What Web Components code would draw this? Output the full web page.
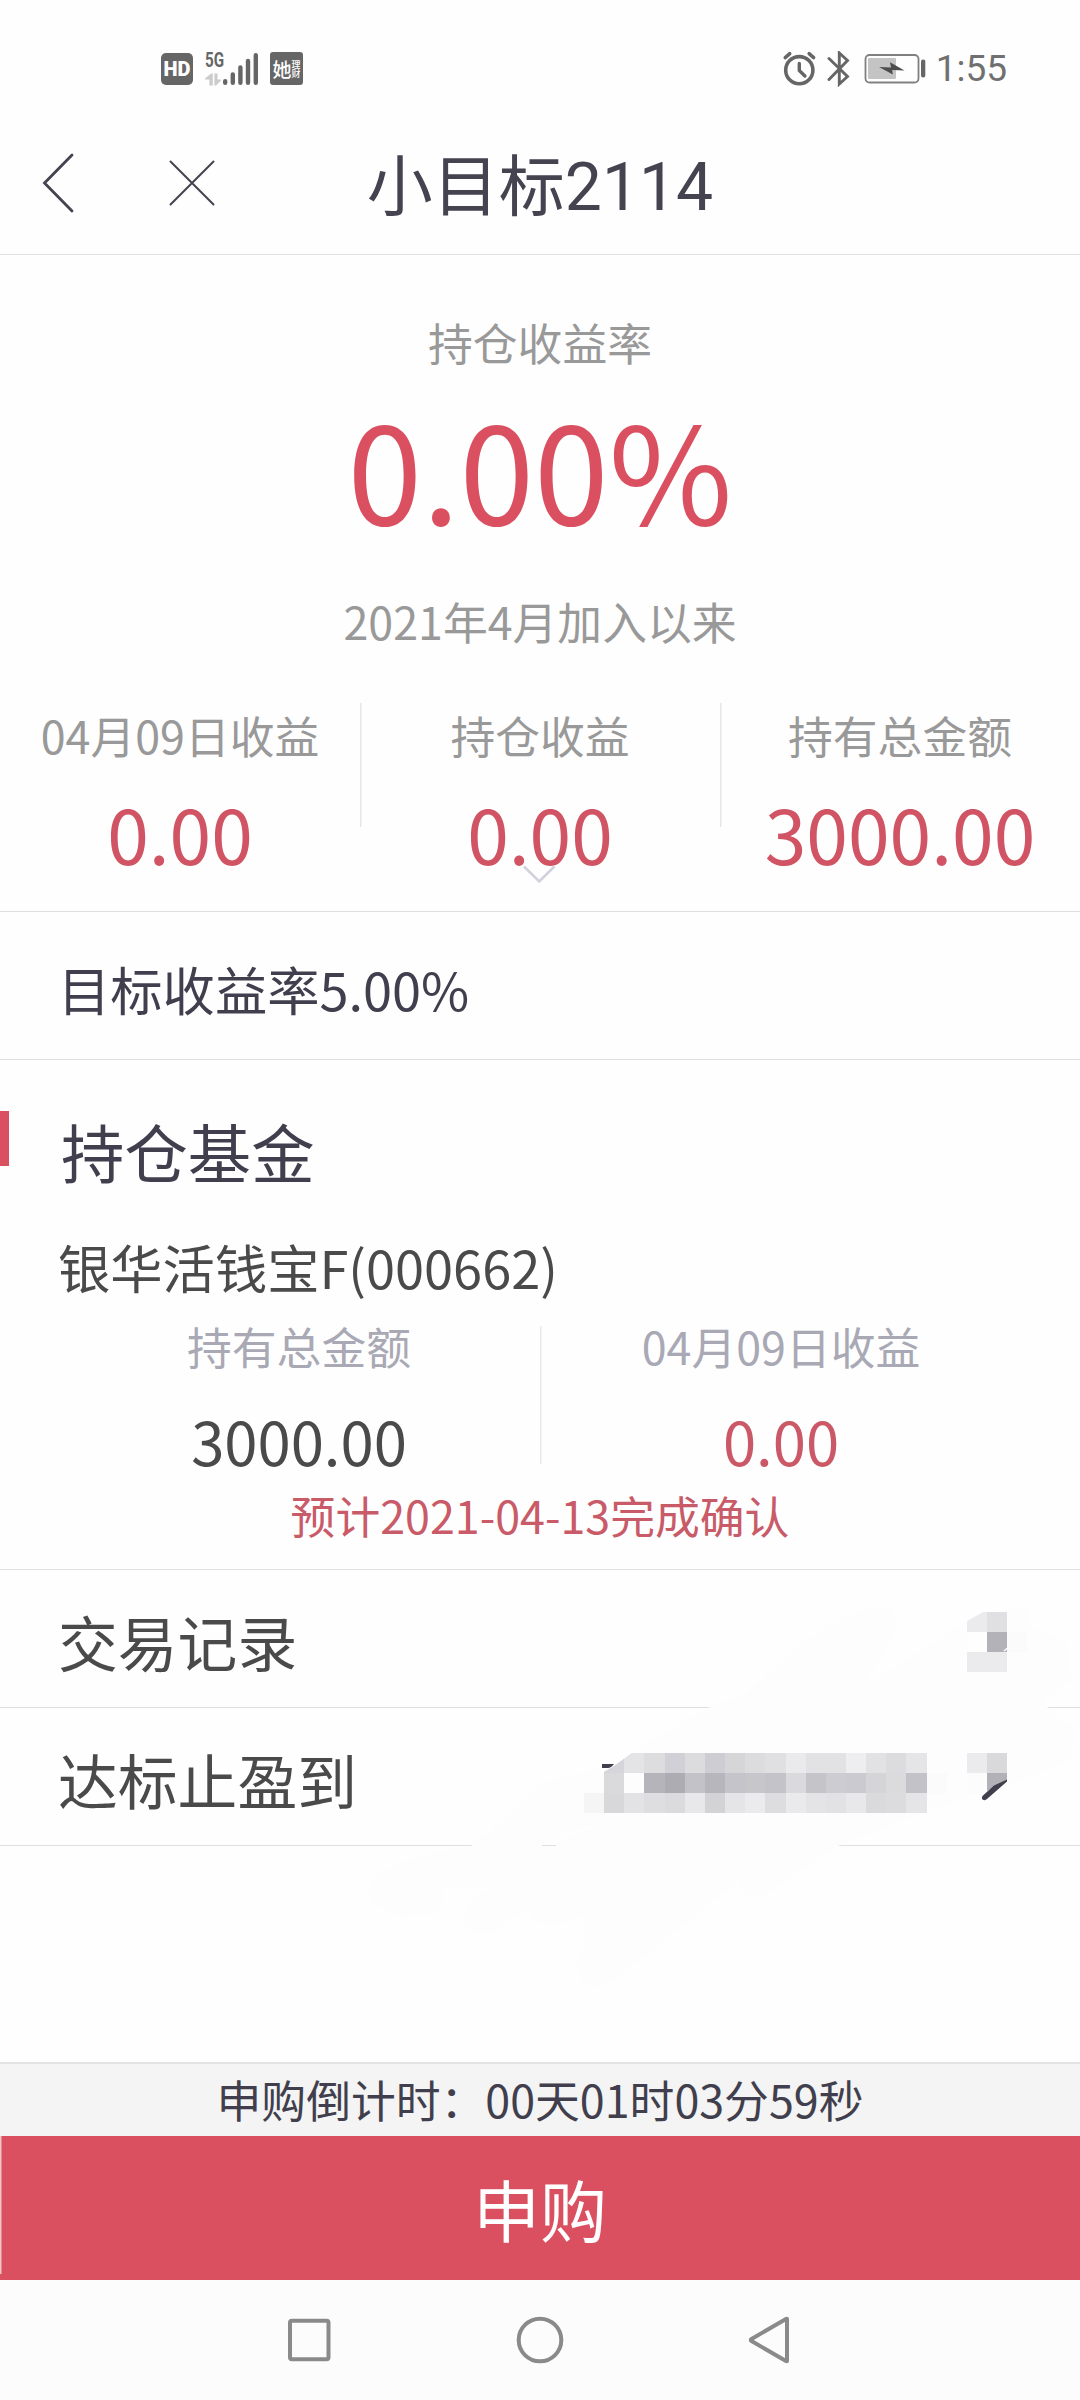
<!DOCTYPE html>
<html lang="zh-CN">
<head>
<meta charset="utf-8">
<title>小目标2114</title>
<style>
  html, body { margin: 0; }
  body {
    width: 1080px;
    height: 2400px;
    overflow: hidden;
    background: #fefefe;
    font-family: "Noto Sans CJK SC", sans-serif;
    --red: #da5060;
    --ink: #413f4d;
    --line: #dfdfdf;
    --soft: #f4f4f4;
  }
</style>
</head>
<body>
<fund-page>
  <status-bar slot="top" time="1:55"></status-bar>
  <title-bar slot="top">小目标2114</title-bar>

  <profit-panel label="持仓收益率" rate="0.00%" since="2021年4月加入以来">
    <stat-item label="04月09日收益">0.00</stat-item>
    <stat-item label="持仓收益">0.00</stat-item>
    <stat-item label="持有总金额">3000.00</stat-item>
  </profit-panel>
  <target-row>目标收益率5.00%</target-row>
  <fund-card heading="持仓基金" name="银华活钱宝F(000662)" note="预计2021-04-13完成确认">
    <stat-item class="small dark" label="持有总金额">3000.00</stat-item>
    <stat-item class="small" label="04月09日收益">0.00</stat-item>
  </fund-card>
  <link-list>
    <link-row>交易记录</link-row>
    <link-row>达标止盈到</link-row>
  </link-list>

  <buy-bar slot="bottom" countdown="申购倒计时：00天01时03分59秒">申购</buy-bar>
  <system-nav slot="bottom"></system-nav>
</fund-page>

<script>
// Small helper: open shadow root + markup
function render(el, html) {
  el.attachShadow({ mode: 'open' }).innerHTML = html;
}

// Page frame: top bars, scrolling content, bottom bars
class FundPage extends HTMLElement {
  connectedCallback() {
    render(this, `
      <style>
        :host { display: flex; flex-direction: column; width: 1080px; height: 2400px; }
        main { flex: 1; min-height: 0; }
      </style>
      <slot name="top"></slot>
      <main><slot></slot></main>
      <slot name="bottom"></slot>
    `);
  }
}
customElements.define('fund-page', FundPage);

// Phone status bar
class StatusBar extends HTMLElement {
  connectedCallback() {
    render(this, `
      <style>
        :host {
          display: flex; justify-content: space-between; align-items: center;
          box-sizing: border-box; height: 112px; padding: 25px 73px 0 161px;
          color: #666; font-family: Roboto, sans-serif;
        }
        .group { display: flex; align-items: center; }
        .hd, .app {
          display: flex; align-items: center; justify-content: center;
          width: 32px; height: 32px; border-radius: 5px;
          background: #666; color: #fff; overflow: hidden;
        }
        .hd { font: 900 20px/32px Roboto, sans-serif; }
        .signal { display: grid; grid-template-columns: 18px 36px; margin: 0 11px 0 12px; height: 34px; }
        .net { font: 700 20px/17px Roboto, sans-serif; transform: scaleX(.76); transform-origin: 0 0; }
        .app { width: 33px; height: 33px; border-radius: 3px; font-family: "Noto Sans CJK SC", sans-serif; }
        .app b { font-size: 19px; font-weight: 500; line-height: 33px; }
        .app span { font-size: 9px; font-weight: 500; line-height: 9px; width: 9px; }
        .time { font-size: 37px; line-height: 37px; color: #707070; margin-left: 9px; }
        svg { display: block; }
      </style>
      <div class="group">
        <div class="hd">HD</div>
        <div class="signal">
          <div>
            <div class="net">5G</div>
            <svg width="18" height="17" fill="#ccc"><path d="M6 4.500h1.800v12H4.400v-6H0v-1zM9.400 4.500h3.200v6H16v1l-5 5H9.400z"/></svg>
          </div>
          <svg width="36" height="34" stroke="#666" stroke-width="4.400" stroke-linecap="round">
            <path d="M2.200 29.200v1.500M9.800 22.500v8.200M17.400 15.500v15.200M25 9v21.700M32.800 3.200v27.500"/>
          </svg>
        </div>
        <div class="app"><b>她</b><span>理财</span></div>
      </div>
      <div class="group">
        <svg width="145" height="36" viewBox="782 51 145 36" fill="none" stroke="#666">
          <circle cx="799.300" cy="70.200" r="13.600" stroke-width="3.600"/>
          <path d="M799.300 63.500v7l5.600 5.500" stroke-width="3.400" stroke-linecap="round" stroke-linejoin="round"/>
          <path d="M785.200 57.600l4.600-4M813.700 57.600l-4.600-4" stroke-width="3.400" stroke-linecap="round"/>
          <path d="M829 58.500l18.500 18-8.200 7.500V53l8.200 7.500L829 79.500" stroke-width="2.900" stroke-linecap="round"/>
          <rect x="865.500" y="55" width="53" height="27.500" rx="4" stroke-width="1.800" stroke="#808080"/>
          <rect x="868" y="58" width="28" height="21" rx="1" fill="#c4c4c4" stroke="none"/>
          <path d="M879 67l12 .5-1-5.300 14.500 8.300-12.300-.6.600 4.500z" fill="#4d4d4d" stroke="none"/>
          <rect x="921" y="59.500" width="4.300" height="18" rx="2" fill="#666" stroke="none"/>
        </svg>
        <div class="time">${this.getAttribute('time')}</div>
      </div>
    `);
  }
}
customElements.define('status-bar', StatusBar);

// Title bar with back and close
class TitleBar extends HTMLElement {
  connectedCallback() {
    render(this, `
      <style>
        :host {
          display: grid; grid-template-columns: 240px 1fr 240px; align-items: center;
          height: 142px; border-bottom: 1px solid var(--line);
        }
        .icons { display: flex; align-items: center; gap: 95px; padding-left: 42px; }
        h1 {
          margin: 0; padding-top: 9px; text-align: center; color: #44434f;
          font: 400 66px/66px Roboto, "Noto Sans CJK SC", sans-serif;
        }
        svg { display: block; fill: none; stroke: #44434f; stroke-linecap: round; }
      </style>
      <div class="icons">
        <svg width="32" height="60" stroke-width="2.800"><path d="M30 2L2.500 30 30 58"/></svg>
        <svg width="46" height="46" stroke-width="2"><path d="M1.500 1.500l43 43M44.500 1.500l-43 43"/></svg>
      </div>
      <h1><slot></slot></h1>
    `);
  }
}
customElements.define('title-bar', TitleBar);

// Label above a number
class StatItem extends HTMLElement {
  connectedCallback() {
    render(this, `
      <style>
        :host { display: block; flex: 1 1 0; text-align: center; white-space: nowrap; }
        .label { font-size: 44.8px; line-height: 60px; color: #999; }
        .value { font-size: 75px; line-height: 80px; margin-top: 28px; color: #d05463; }
        :host(.small) .label { color: #a9a9b5; }
        :host(.small) .value { font-size: 59.800px; line-height: 70px; margin-top: 29px; color: #cb5867; }
        :host(.dark) .value { color: #4a4a4a; }
      </style>
      <div class="label">${this.getAttribute('label')}</div>
      <div class="value"><slot></slot></div>
    `);
  }
}
customElements.define('stat-item', StatItem);

// Main profit numbers
class ProfitPanel extends HTMLElement {
  connectedCallback() {
    render(this, `
      <style>
        :host {
          display: block; position: relative; box-sizing: border-box; height: 657px;
          padding-top: 57px; text-align: center; color: #999;
          border-bottom: 1px solid var(--line);
        }
        .text { font-size: 44.800px; line-height: 60px; }
        .rate { font-size: 134.400px; line-height: 140px; margin: 25px 0 54px; color: var(--red); }
        .stats {
          display: flex; margin-top: 52px; padding-top: 2px;
          background:
            linear-gradient(#e6e6e6, #e6e6e6) 360px 0 / 1.500px 124px no-repeat,
            linear-gradient(#e6e6e6, #e6e6e6) 720px 0 / 1.500px 124px no-repeat;
        }
        /* expand arrow, sits over the middle number */
        .more { position: absolute; left: 522px; top: 609px; }
      </style>
      <div class="text">${this.getAttribute('label')}</div>
      <div class="rate">${this.getAttribute('rate')}</div>
      <div class="text">${this.getAttribute('since')}</div>
      <div class="stats"><slot></slot></div>
      <svg class="more" width="34" height="20" fill="none" stroke="#d2d2de" stroke-width="2.600">
        <path d="M2 2.500L17.200 17.500 32.400 2.500"/>
      </svg>
    `);
  }
}
customElements.define('profit-panel', ProfitPanel);

class TargetRow extends HTMLElement {
  connectedCallback() {
    render(this, `
      <style>
        :host {
          display: flex; align-items: center; box-sizing: border-box; height: 148px;
          padding: 4px 58px 0; font-size: 52.300px; line-height: 60px; color: var(--ink);
          border-bottom: 1px solid var(--line);
        }
      </style>
      <slot></slot>
    `);
  }
}
customElements.define('target-row', TargetRow);

// Held fund
class FundCard extends HTMLElement {
  connectedCallback() {
    render(this, `
      <style>
        :host {
          display: block; box-sizing: border-box; height: 510px; padding-top: 50px;
          border-bottom: 1px solid var(--line);
        }
        .heading { display: flex; gap: 52px; }
        .heading i { width: 9px; height: 55px; margin-top: 1px; background: var(--red); }
        h2 { margin: 0; font-weight: 400; font-size: 63.400px; line-height: 80px; color: var(--ink); }
        .name { margin: 46px 58px 20px; font-size: 52.300px; line-height: 60px; color: #4a4a4a; }
        .stats {
          display: flex; margin: 0 58px;
          background: linear-gradient(#e8e8e8, #e8e8e8) 482px 10px / 1.500px 138px no-repeat;
        }
        .note { margin-top: 10px; text-align: center; font-size: 44.800px; line-height: 60px; color: #c95a68; }
      </style>
      <div class="heading"><i></i><h2>${this.getAttribute('heading')}</h2></div>
      <div class="name">${this.getAttribute('name')}</div>
      <div class="stats"><slot></slot></div>
      <div class="note">${this.getAttribute('note')}</div>
    `);
  }
}
customElements.define('fund-card', FundCard);

class LinkRow extends HTMLElement {
  connectedCallback() {
    render(this, `
      <style>
        :host {
          display: flex; align-items: center; box-sizing: border-box; height: 138px;
          padding: 4px 58px 0; font-size: 59.800px; line-height: 70px; color: #4a4a4a;
          border-bottom: 1px solid var(--line);
        }
      </style>
      <slot></slot>
    `);
  }
}
customElements.define('link-row', LinkRow);

// Rows of grey levels for the hidden values: [column, top, colours]
const tiles = [
  [19, 1612, ['ebebed', 'e0e0e2']],
  [19, 1632, ['fefefe', 'b3b2b8', 'fbfbfb']],
  [19, 1652, ['ebebed', 'ebebed']],
  [1, 1753, ['d6d5dc', 'e4e4e6', 'dddcdf', 'd1d0d6', 'dcdcde', 'cecdd3', 'd6d6d8', 'dcdcdf', 'e0e0e2', 'eaeaec', 'e2e2e4', 'e2e2e4', 'eeeef0', 'e2e2e4', 'dcdcde', 'e5e5e7']],
  [1, 1773, ['dad9dc', 'fdfdfd', 'b5b4ba', 'adacb3', 'c3c2c8', 'b7b6bd', 'c5c4ca', 'c7c6cb', 'c4c3c9', 'dad9db', 'c5c4c9', 'cdccd2', 'cbcad0', 'd5d4d7', 'dbdadd', 'c3c2c8', 'fbfbfb']],
  [0, 1793, ['f5f5f5', 'd8d8da', 'e3e3e5', 'dedee0', 'dbdadd', 'e8e8ea', 'd3d3d5', 'e5e5e7', 'ebebed', 'dddcdf', 'eaeaec', 'e4e4e6', 'e2e2e4', 'e8e8ea', 'dadadc', 'dcdcde', 'e5e5e7']],
  [19, 1753, ['ebebed', 'd9d9db']],
  [19, 1773, ['fcfcfc', 'b2b1b7']]
];

// List of links with the values on the right covered
class LinkList extends HTMLElement {
  connectedCallback() {
    const left = col => Math.round(584 + col * 20.150);
    const rects = tiles.map(([col, y, colours]) => colours.map((c, i) => {
      const x = left(col + i);
      return `<rect x="${x}" y="${y}" width="${left(col + i + 1) - x}" height="20" fill="#${c}"/>`;
    }).join('')).join('');

    render(this, `
      <style>
        :host { display: block; position: relative; }
        .cover { position: absolute; left: 0; top: 0; }
      </style>
      <slot></slot>
      <svg class="cover" width="1080" height="430" viewBox="0 1570 1080 430">
        <path fill="#fdfdfd" d="M471 1846L487 1834 540 1784 600 1768 632 1752 708 1708 745 1694 795 1650Q840 1612 880 1606 902 1612 896 1632L862 1688 967 1621 990 1611 1027 1606 1031 1628 1066 1640 1072 1680 1043 1702 1049 1709 1076 1730 1070 1762 1020 1780 970 1796 925 1812 838 1846 775 1888Q765 1899 752 1897 741 1893 738 1882L640 1960 605 1985Q592 1990 580 1980 572 1962 585 1948L583 1916 560 1924Q535 1928 527 1908L495 1932Q480 1938 466 1925 458 1912 474 1898L490 1888H443Q445 1912 435 1914L400 1916Q370 1908 368 1890 372 1868 433 1853z"/>
        <path fill="none" stroke="#fefefe" stroke-width="4" d="M549 1846q15-13 45-19"/>
        <g shape-rendering="crispEdges">${rects}</g>
        <path fill="#fefefe" d="M600 1752h33l-19 14-12 7h-4zM966 1610h21l-20 11zM966 1800l21-9 21-12v16h-42z"/>
        <path stroke="#fefefe" stroke-width="1.500" d="M1004 1651l6-5"/>
        <path fill="#413f4d" d="M602 1764h12q-3 4-6 4h-6zM1007 1779.500v2L987 1799q-2 2-4.500.5-1.500-2 .5-4l11-10z"/>
        <path stroke="#dfdfdf" d="M542 1845.500h14"/>
      </svg>
    `);
  }
}
customElements.define('link-list', LinkList);

// Countdown and buy button
class BuyBar extends HTMLElement {
  connectedCallback() {
    render(this, `
      <style>
        :host { display: block; text-align: center; }
        .countdown {
          box-sizing: border-box; height: 74px; border-top: 2px solid #e2e2e2;
          background: var(--soft); color: var(--ink); font-size: 44.800px; line-height: 69px;
        }
        button {
          display: block; width: 100%; height: 144px; border: 0; padding: 0;
          background: linear-gradient(#f3c4ca, #f3c4ca) 0 0 / 1.500px 138px no-repeat var(--red);
          color: #fff; font: inherit; font-size: 67px; line-height: 144px;
        }
      </style>
      <div class="countdown">${this.getAttribute('countdown')}</div>
      <button><slot></slot></button>
    `);
  }
}
customElements.define('buy-bar', BuyBar);

// Android navigation keys
class SystemNav extends HTMLElement {
  connectedCallback() {
    render(this, `
      <style>
        :host {
          display: flex; justify-content: center; align-items: center; gap: 182px;
          height: 120px; background: #fcfcfc;
        }
        svg { display: block; fill: none; stroke: #8a8a8a; stroke-width: 4; stroke-linejoin: round; }
      </style>
      <svg width="50" height="50"><rect x="7" y="5.800" width="38.500" height="38.500" rx="2"/></svg>
      <svg width="50" height="50"><circle cx="25" cy="25" r="21.300"/></svg>
      <svg width="50" height="50"><path d="M40 4v42q0 .5-1 0L4.500 26q-1.500-1 0-2L39 4q1-.5 1 0z"/></svg>
    `);
  }
}
customElements.define('system-nav', SystemNav);
</script>
</body>
</html>
